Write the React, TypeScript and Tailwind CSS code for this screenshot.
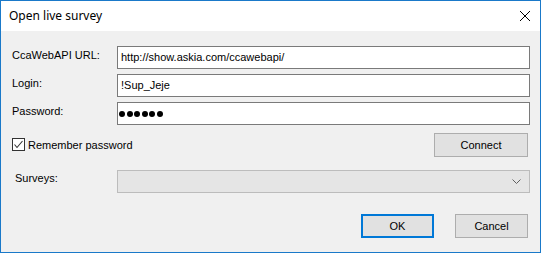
import React from "react";

const sans = { fontFamily: '"Liberation Sans", Arial, sans-serif' };

function Row({ label, children }: { label: string; children: React.ReactNode }) {
  return (
    <div className="flex items-start h-[23px] mb-[5px]">
      <div className="w-[105px] pt-[3px] text-[11px] leading-[13px] text-black">{label}</div>
      <div className="flex-1 h-[23px] border border-[#7a7a7a] bg-white flex items-center px-[3px] text-[11px] leading-[13px] text-black">
        {children}
      </div>
    </div>
  );
}

export default function App() {
  return (
    <div
      className="w-[541px] h-[253px] border border-[#1a79c9] bg-[#f0f0f0] flex flex-col overflow-hidden"
      style={sans}
    >
      <div className="h-[30px] bg-white flex items-center justify-between pl-[8px] pr-[10px]">
        <span
          className="text-[12px] leading-[16px] text-black"
          style={{ fontFamily: '"Noto Sans", "Open Sans", sans-serif' }}
        >
          Open live survey
        </span>
        <svg width="10" height="10" viewBox="0 0 10 10" className="block">
          <path d="M0 0 L10 10 M10 0 L0 10" stroke="#000" strokeWidth="1" fill="none" />
        </svg>
      </div>
      <div className="flex-1 flex flex-col pl-[11px] pr-[10px] pt-[15px]">
        <Row label="CcaWebAPI URL:">http://show.askia.com/ccawebapi/</Row>
        <Row label="Login:">!Sup_Jeje</Row>
        <Row label="Password:">
          <div className="flex gap-[1.5px] -ml-[2px]">
            {[0, 1, 2, 3, 4, 5].map((i) => (
              <span key={i} className="w-[6px] h-[6px] rounded-full bg-black" />
            ))}
          </div>
        </Row>
        <div className="flex items-start justify-between h-[24px] mt-[3px]">
          <div className="flex items-center h-[24px]">
            <div className="w-[13px] h-[13px] border border-[#333333] bg-white flex items-center justify-center -mt-[2px]">
              <svg width="11" height="11" viewBox="0 0 11 11" className="block">
                <path d="M1.5 5.5 L4 8.5 L9.5 2" stroke="#333" strokeWidth="1.1" fill="none" />
              </svg>
            </div>
            <span className="ml-[3px] text-[11px] leading-[13px] text-black">Remember password</span>
          </div>
          <button className="w-[94px] h-[24px] mr-[2px] border border-[#adadad] bg-[#e1e1e1] text-[11px] leading-[13px] text-black flex items-center justify-center">
            Connect
          </button>
        </div>
        <div className="flex items-start h-[23px] mt-[13px]">
          <div className="w-[105px] pl-[3px] pt-[2px] text-[11px] leading-[13px] text-black">Surveys:</div>
          <div className="flex-1 h-[23px] border border-[#bcbcbc] bg-[#e5e5e5] flex items-center justify-end pr-[8px]">
            <svg width="9" height="5" viewBox="0 0 9 5" className="block">
              <path d="M0.5 0.5 L4.5 4.5 L8.5 0.5" stroke="#606060" strokeWidth="1" fill="none" />
            </svg>
          </div>
        </div>
        <div className="flex justify-end gap-[21px] mt-[21px] mr-[2px]">
          <button className="w-[73px] h-[24px] border-2 border-[#0078d7] bg-[#e1e1e1] text-[11px] leading-[13px] text-black flex items-center justify-center">
            OK
          </button>
          <button className="w-[73px] h-[24px] border border-[#adadad] bg-[#e1e1e1] text-[11px] leading-[13px] text-black flex items-center justify-center">
            Cancel
          </button>
        </div>
      </div>
    </div>
  );
}
